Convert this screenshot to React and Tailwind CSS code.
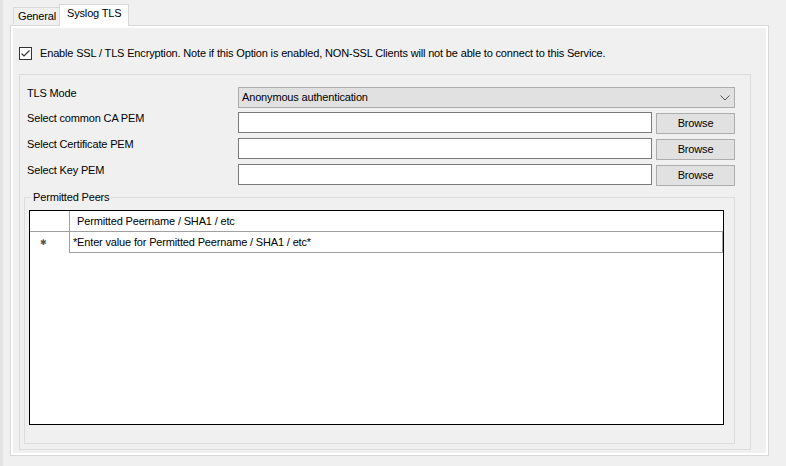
function Field({ label }) {
  return (
    <div className="flex h-[26px] items-start">
      <span className="w-[211px] leading-[13px]">{label}</span>
      <div className="h-[21px] w-[414px] border border-[#7a7a7a] bg-white" />
      <button className="ml-[4px] mt-[1px] h-[21px] w-[79px] border border-[#adadad] bg-[#e1e1e1] leading-[19px]">
        Browse
      </button>
    </div>
  );
}

export default function App() {
  return (
    <div
      className="flex h-[466px] w-[786px] flex-col border-l-[3px] border-[#e3e3e3] bg-[#f0f0f0] pl-[7px] text-[11px] tracking-[-0.16px] text-black"
      style={{ fontFamily: '"Liberation Sans", Arial, sans-serif' }}
    >
      {/* tabs */}
      <div className="relative z-10 flex h-[25px] items-end pl-[3px]">
        <div className="mb-px h-[17px] w-[46px] border-l border-t border-[#d9d9d9] bg-[#f0f0f0] pl-[4px] leading-[16px]">
          General
        </div>
        <div className="-mb-px h-[22px] w-[70px] border-x border-t border-[#d9d9d9] bg-white pl-[7px] leading-[17px]">
          Syslog TLS
        </div>
      </div>

      {/* tab panel */}
      <div className="h-[431px] w-[759px] border border-[#d9d9d9] bg-white p-[2px]">
        <div className="flex h-full flex-col bg-[#f0f0f0] pl-[6px]">
          <label className="mt-[19px] flex items-center gap-[8px]">
            <span className="flex h-[13px] w-[13px] items-center justify-center border border-[#333] bg-white">
              <svg width="11" height="11" viewBox="0 0 11 11">
                <path d="M1.5 5.5 L4 8 L9.5 2.5" fill="none" stroke="#333" strokeWidth="1.2" />
              </svg>
            </span>
            <span className="leading-[13px]">
              Enable SSL / TLS Encryption. Note if this Option is enabled, NON-SSL Clients will not be able to connect to this Service.
            </span>
          </label>

          {/* outer group box */}
          <div className="mt-[14px] flex h-[376px] w-[732px] flex-col border border-[#dcdcdc] pl-[7px] pt-[12px]">
            <div className="flex h-[25px] items-start">
              <span className="w-[211px] leading-[13px]">TLS Mode</span>
              <div className="flex h-[21px] w-[497px] items-center justify-between border border-[#adadad] bg-[#e1e1e1] pl-[3px] pr-[4px]">
                <span>Anonymous authentication</span>
                <svg width="10" height="6" viewBox="0 0 10 6">
                  <path d="M0.5 0.5 L5 5 L9.5 0.5" fill="none" stroke="#555" strokeWidth="1" />
                </svg>
              </div>
            </div>
            <Field label="Select common CA PEM" />
            <Field label="Select Certificate PEM" />
            <Field label="Select Key PEM" />

            {/* Permitted Peers */}
            <div className="relative -ml-[3px] mt-[7px] h-[247px] w-[711px] border border-[#dcdcdc] px-[4px] pt-[12px]">
              <span className="absolute -top-[7px] left-[6px] bg-[#f0f0f0] px-[2px] leading-[13px]">
                Permitted Peers
              </span>
              <div className="h-[215px] w-[695px] border border-black bg-white">
                <div className="flex h-[21px] border-b border-[#a0a0a0]">
                  <div className="w-[40px] border-r border-[#a0a0a0]" />
                  <div className="flex-1 pl-[7px] leading-[20px]">Permitted Peername / SHA1 / etc</div>
                </div>
                <div className="flex h-[21px]">
                  <div className="flex w-[40px] items-center border-r border-[#a0a0a0] pl-[10px] text-[8px] leading-none text-[#555]">
                    ✱
                  </div>
                  <div className="flex-1 border-b border-r border-[#a0a0a0] pl-[3px] leading-[20px]">
                    *Enter value for Permitted Peername / SHA1 / etc*
                  </div>
                </div>
              </div>
            </div>
          </div>
        </div>
      </div>
    </div>
  );
}
